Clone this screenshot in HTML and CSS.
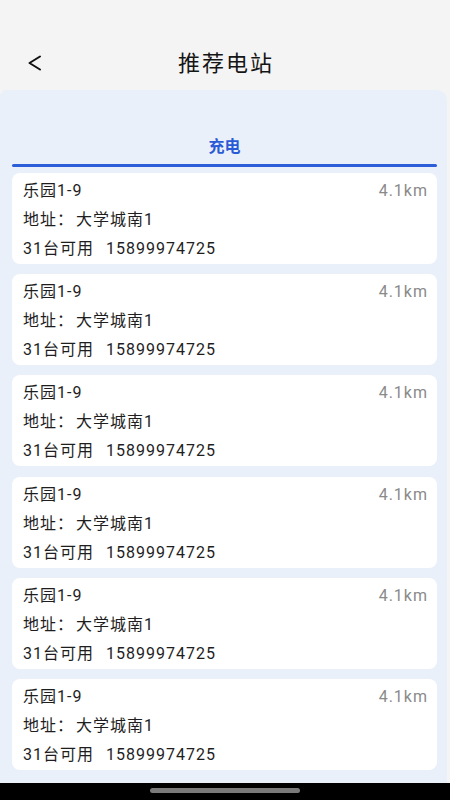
FILE: index.html
```html
<!DOCTYPE html>
<html lang="zh">
<head>
<meta charset="utf-8">
<title>推荐电站</title>
<link rel="stylesheet" href="styles.css">
</head>
<body>
<div class="app">
  <header class="header">
    <span class="back">
      <svg width="16" height="16" viewBox="0 0 16 16"><path d="M13 1.5 L2.5 8 L13 14.5" fill="none" stroke="#111" stroke-width="2" stroke-linecap="round" stroke-linejoin="round"/></svg>
    </span>
    <h1 class="title">推荐电站</h1>
  </header>
  <main class="panel">
    <div class="tabs">
      <div class="tab">充电</div>
      <div class="tab-line"></div>
    </div>
    <ul class="list">
      <li class="card"><div class="row"><span>乐园1-9</span><span class="dist">4.1km</span></div><div class="row"><span>地址：<span class="addr">大学城南1</span></span></div><div class="row"><span>31台可用<span class="phone">15899974725</span></span></div></li>
      <li class="card"><div class="row"><span>乐园1-9</span><span class="dist">4.1km</span></div><div class="row"><span>地址：<span class="addr">大学城南1</span></span></div><div class="row"><span>31台可用<span class="phone">15899974725</span></span></div></li>
      <li class="card"><div class="row"><span>乐园1-9</span><span class="dist">4.1km</span></div><div class="row"><span>地址：<span class="addr">大学城南1</span></span></div><div class="row"><span>31台可用<span class="phone">15899974725</span></span></div></li>
      <li class="card"><div class="row"><span>乐园1-9</span><span class="dist">4.1km</span></div><div class="row"><span>地址：<span class="addr">大学城南1</span></span></div><div class="row"><span>31台可用<span class="phone">15899974725</span></span></div></li>
      <li class="card"><div class="row"><span>乐园1-9</span><span class="dist">4.1km</span></div><div class="row"><span>地址：<span class="addr">大学城南1</span></span></div><div class="row"><span>31台可用<span class="phone">15899974725</span></span></div></li>
      <li class="card"><div class="row"><span>乐园1-9</span><span class="dist">4.1km</span></div><div class="row"><span>地址：<span class="addr">大学城南1</span></span></div><div class="row"><span>31台可用<span class="phone">15899974725</span></span></div></li>
    </ul>
  </main>
  <div class="navbar"><div class="indicator"></div></div>
</div>
</body>
</html>
```
FILE: styles.css
```css
* { box-sizing: border-box; }
html, body { margin: 0; padding: 0; }
body {
  background: #f4f4f5;
  font-family: Roboto, "Noto Sans CJK SC", sans-serif;
  color: #1e1e1e;
}
.app {
  width: 450px;
  height: 800px;
  display: flex;
  flex-direction: column;
  overflow: hidden;
}
.header {
  height: 90px;
  flex: none;
  padding-top: 36px;
  display: grid;
  grid-template-columns: 1fr auto 1fr;
  align-items: center;
}
.back {
  grid-column: 1;
  height: 54px;
  display: flex;
  align-items: center;
  padding-left: 27px;
}
.back svg { display: block; }
.title {
  grid-column: 2;
  margin: 0 0 4px;
  font-family: "Noto Sans CJK SC", sans-serif;
  font-size: 22px;
  font-weight: 400;
  letter-spacing: 2px;
  line-height: 50px;
  color: #151515;
  padding-left: 2px;
}
.panel {
  flex: 1;
  width: 447px;
  background: #eaf0f9;
  border-radius: 6px 10px 0 0;
  padding: 0 10px 13px 12px;
  display: flex;
  flex-direction: column;
}
.tabs {
  padding-top: 45px;
  display: flex;
  flex-direction: column;
  align-items: center;
}
.tab {
  font-family: "Noto Sans CJK SC", sans-serif;
  font-size: 16px;
  font-weight: 700;
  line-height: 20px;
  color: #2a5bd6;
  margin-bottom: 9px;
}
.tab-line {
  align-self: stretch;
  height: 3px;
  border-radius: 2px;
  background: #2b5ed8;
}
.list {
  list-style: none;
  margin: 6px 0 0;
  padding: 0;
  display: flex;
  flex-direction: column;
  gap: 10.2px;
}
.card {
  height: 91px;
  background: #ffffff;
  border-radius: 8px;
  padding: 3px 10px 0 11px;
  font-size: 16px;
  letter-spacing: 1px;
  line-height: 29px;
}
.row {
  display: flex;
  justify-content: space-between;
  white-space: nowrap;
}
.addr {
  margin-left: 2px;
}
.phone {
  margin-left: 12px;
}
.dist {
  color: #8a8a8a;
  letter-spacing: 1px;
  margin-right: -1px;
}
.navbar {
  height: 17px;
  flex: none;
  background: #000;
  display: flex;
  justify-content: center;
  padding-top: 5px;
}
.indicator {
  width: 150px;
  height: 5px;
  border-radius: 3px;
  background: #7a7a7a;
}
```
